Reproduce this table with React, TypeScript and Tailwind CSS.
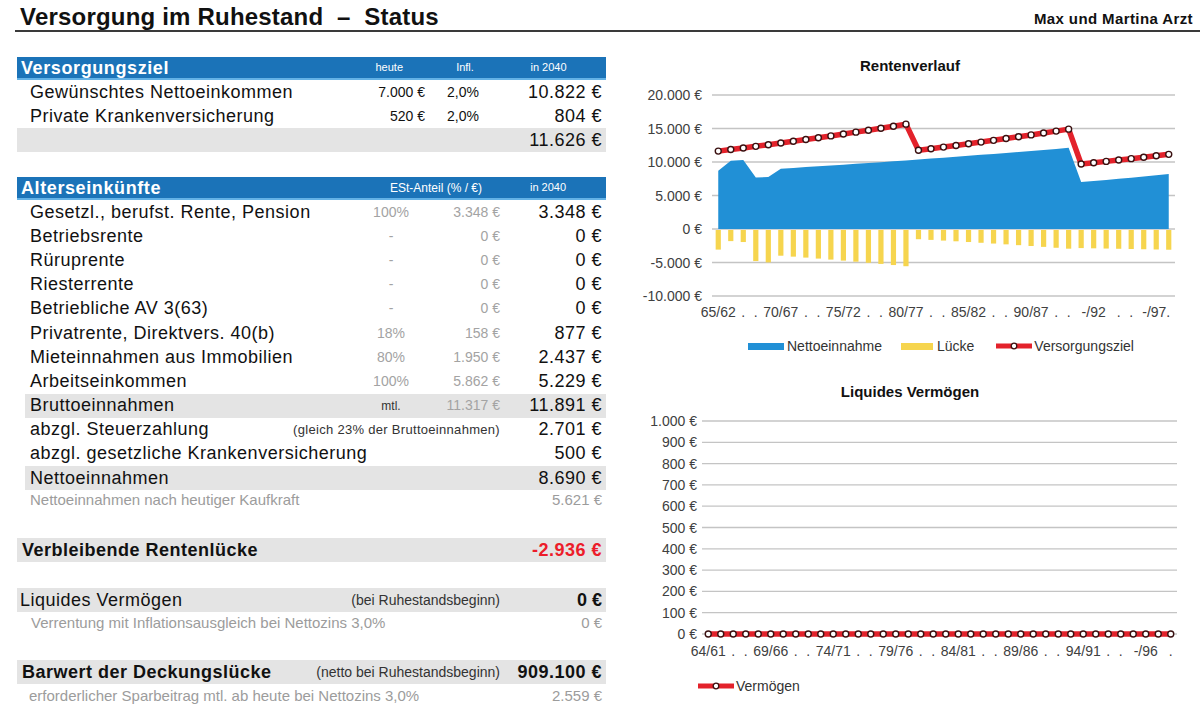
import React from "react";

// Rentenverlauf: 37 Jahre, Versorgungsziel wächst mit 2 % Inflation
const N1 = 37;
const STEP1 = 463 / N1;
const cx1 = (i: number) => 92 + STEP1 * (i + 0.5);
const cy1 = (v: number) => 153 - (v / 5000) * 33.5;
const ziel = Array.from({ length: N1 }, (_, i) =>
  i <= 15 ? 11626 * 1.02 ** i : i <= 28 ? 11750 * 1.02 ** (i - 16) : 9700 * 1.02 ** (i - 29)
);
const head = [8700, 10200, 10300, 7700, 7750];
const netto = Array.from({ length: N1 }, (_, i) =>
  i < 5 ? head[i] : i <= 28 ? 9000 * 1.013 ** (i - 5) : 7000 * 1.0228 ** (i - 29)
);

// Liquides Vermögen: 38 Jahre, alles 0
const N2 = 38;
const STEP2 = 475 / N2;
const cx2 = (i: number) => 82 + STEP2 * (i + 0.5);
const cy2 = (v: number) => 232 - (v / 100) * 21.3;

function Marker({ x, y }: { x: number; y: number }) {
  return <circle cx={x} cy={y} r={3} fill="#fff" stroke="#3a1010" strokeWidth={1.4} />;
}

function RentenChart() {
  const area =
    `M${cx1(0)},${cy1(0)} ` +
    netto.map((v, i) => `L${cx1(i)},${cy1(v)}`).join(" ") +
    ` L${cx1(N1 - 1)},${cy1(0)} Z`;
  const line = ziel.map((v, i) => `${i === 0 ? "M" : "L"}${cx1(i)},${cy1(v)}`).join(" ");
  const labels = ["65/62", "70/67", "75/72", "80/77", "85/82", "90/87", "-/92", "-/97."];
  const dots = [2, 3, 7, 8, 12, 13, 17, 18, 22, 23, 27, 28, 32, 33];
  return (
    <svg width={580} height={250} viewBox="0 0 580 250" className="block">
      {[20000, 15000, 10000, 5000, 0, -5000, -10000].map((v) => (
        <g key={v}>
          <line x1={92} x2={555} y1={cy1(v)} y2={cy1(v)} stroke="#c4c4c4" strokeWidth={1.3} />
          <text x={82} y={cy1(v) + 5} textAnchor="end" fontSize={14} fill="#404040">
            {v.toLocaleString("de-DE")} €
          </text>
        </g>
      ))}
      <path d={area} fill="#2190d6" />
      {netto.map((v, i) => (
        <rect
          key={i}
          x={cx1(i) - 2.6}
          y={cy1(0) + 1}
          width={5.2}
          height={((ziel[i] - v) / 5000) * 33.5}
          fill="#f6d54e"
        />
      ))}
      <path d={line} fill="none" stroke="#e3222b" strokeWidth={5.5} strokeLinejoin="round" />
      {ziel.map((v, i) => (
        <Marker key={i} x={cx1(i)} y={cy1(v)} />
      ))}
      {labels.map((t, k) => (
        <text key={t} x={cx1(k * 5)} y={241} textAnchor="middle" fontSize={14} fill="#404040">
          {t}
        </text>
      ))}
      {dots.map((i) => (
        <text key={i} x={cx1(i)} y={241} textAnchor="middle" fontSize={14} fill="#404040">
          .
        </text>
      ))}
    </svg>
  );
}

function VermoegenChart() {
  const labels = ["64/61", "69/66", "74/71", "79/76", "84/81", "89/86", "94/91", "-/96"];
  const dots = [2, 3, 7, 8, 12, 13, 17, 18, 22, 23, 27, 28, 32, 33, 37];
  return (
    <svg width={580} height={260} viewBox="0 0 580 260" className="block">
      {[1000, 900, 800, 700, 600, 500, 400, 300, 200, 100, 0].map((v) => (
        <g key={v}>
          <line x1={82} x2={557} y1={cy2(v)} y2={cy2(v)} stroke="#c4c4c4" strokeWidth={1.3} />
          <text x={77} y={cy2(v) + 5} textAnchor="end" fontSize={14} fill="#404040">
            {v.toLocaleString("de-DE")} €
          </text>
        </g>
      ))}
      <line x1={cx2(0)} x2={cx2(N2 - 1)} y1={cy2(0)} y2={cy2(0)} stroke="#e3222b" strokeWidth={5.5} />
      {Array.from({ length: N2 }, (_, i) => (
        <Marker key={i} x={cx2(i)} y={cy2(0)} />
      ))}
      {labels.map((t, k) => (
        <text key={t} x={cx2(k * 5)} y={254} textAnchor="middle" fontSize={14} fill="#404040">
          {t}
        </text>
      ))}
      {dots.map((i) => (
        <text key={i} x={cx2(i)} y={254} textAnchor="middle" fontSize={14} fill="#404040">
          .
        </text>
      ))}
    </svg>
  );
}

function LineSwatch() {
  return (
    <svg width={36} height={10} viewBox="0 0 36 10" className="block">
      <line x1={0} x2={36} y1={5} y2={5} stroke="#e3222b" strokeWidth={5} />
      <circle cx={18} cy={5} r={2.8} fill="#fff" stroke="#3a1010" strokeWidth={1.3} />
    </svg>
  );
}

function BlueBar({ title, children }: { title: string; children: React.ReactNode }) {
  return (
    <div className="flex items-center h-[23px] bg-[#1b73b8] border-b-2 border-[#63b2e6] pl-[4px] pr-[4px] text-white">
      <div className="flex-1 text-[18px] font-bold tracking-[0.6px] leading-none">{title}</div>
      {children}
    </div>
  );
}

type RowProps = {
  label: string;
  pct?: string;
  amt?: string;
  value: string;
};

function EinkunftRow({ label, pct, amt, value }: RowProps) {
  return (
    <div className="flex items-center h-[24.2px] pl-[13px] pr-[4px]">
      <div className="flex-1 text-[18px] tracking-[0.5px]">{label}</div>
      <div className="w-[62px] text-center text-[14px] text-[#a3a3a3]">{pct}</div>
      <div className="w-[78px] text-right text-[14px] text-[#a3a3a3]">{amt}</div>
      <div className="w-[102px] text-right text-[18px] tracking-[0.5px]">{value}</div>
    </div>
  );
}

const einkuenfte: RowProps[] = [
  { label: "Gesetzl., berufst. Rente, Pension", pct: "100%", amt: "3.348 €", value: "3.348 €" },
  { label: "Betriebsrente", pct: "-", amt: "0 €", value: "0 €" },
  { label: "Rüruprente", pct: "-", amt: "0 €", value: "0 €" },
  { label: "Riesterrente", pct: "-", amt: "0 €", value: "0 €" },
  { label: "Betriebliche AV 3(63)", pct: "-", amt: "0 €", value: "0 €" },
  { label: "Privatrente, Direktvers. 40(b)", pct: "18%", amt: "158 €", value: "877 €" },
  { label: "Mieteinnahmen aus Immobilien", pct: "80%", amt: "1.950 €", value: "2.437 €" },
  { label: "Arbeitseinkommen", pct: "100%", amt: "5.862 €", value: "5.229 €" },
];

export default function App() {
  return (
    <div className="w-[1200px] h-[722px] overflow-hidden bg-white text-[#111] font-['Liberation_Sans',Arial,sans-serif]">
      <header className="flex items-end justify-between h-[32px] ml-[15px] border-b-2 border-[#3a3a3a] pl-[5px] pr-[7px]">
        <h1 className="text-[24px] font-bold tracking-[0.2px] leading-[26px]">
          Versorgung im Ruhestand&nbsp; –&nbsp; Status
        </h1>
        <span className="text-[15px] font-bold tracking-[0.4px] leading-[20px] pb-[1px]">Max und Martina Arzt</span>
      </header>

      <div className="flex">
        {/* linke Spalte: Tabellen */}
        <section className="w-[589px] ml-[17px] pt-[25px]">
          <BlueBar title="Versorgungsziel">
            <div className="w-[80px] text-right pr-[22px] text-[11px]">heute</div>
            <div className="w-[80px] text-center text-[11px]">Infl.</div>
            <div className="w-[97px] text-center pr-[10px] text-[11px]">in 2040</div>
          </BlueBar>
          {[
            ["Gewünschtes Nettoeinkommen", "7.000 €", "2,0%", "10.822 €"],
            ["Private Krankenversicherung", "520 €", "2,0%", "804 €"],
          ].map(([l, h, f, v]) => (
            <div key={l} className="flex items-center h-[24px] pl-[13px] pr-[4px]">
              <div className="flex-1 text-[18px] tracking-[0.5px]">{l}</div>
              <div className="w-[80px] text-right text-[14px]">{h}</div>
              <div className="w-[80px] pl-[22px] text-[14px]">{f}</div>
              <div className="w-[97px] text-right text-[18px] tracking-[0.5px]">{v}</div>
            </div>
          ))}
          <div className="flex items-center justify-end h-[24px] bg-[#e4e4e4] pr-[4px] text-[18px] tracking-[0.5px]">
            11.626 €
          </div>

          <div className="mt-[25px]">
            <BlueBar title="Alterseinkünfte">
              <div className="w-[140px] text-center pl-[12px] text-[12px]">ESt-Anteil (% / €)</div>
              <div className="w-[102px] text-center pr-[6px] text-[11px]">in 2040</div>
            </BlueBar>
          </div>
          {einkuenfte.map((r) => (
            <EinkunftRow key={r.label} {...r} />
          ))}
          <div className="flex items-center h-[24.2px] ml-[8px] pl-[5px] pr-[4px] bg-[#e4e4e4]">
            <div className="flex-1 text-[18px] tracking-[0.5px]">Bruttoeinnahmen</div>
            <div className="w-[62px] text-center text-[12px] text-[#333]">mtl.</div>
            <div className="w-[78px] text-right text-[14px] text-[#a3a3a3]">11.317 €</div>
            <div className="w-[102px] text-right text-[18px] tracking-[0.5px]">11.891 €</div>
          </div>
          <div className="flex items-center h-[24.2px] pl-[13px] pr-[4px]">
            <div className="flex-1 text-[18px] tracking-[0.5px]">abzgl. Steuerzahlung</div>
            <div className="text-[13px] tracking-[0.3px] text-[#333]">(gleich 23% der Bruttoeinnahmen)</div>
            <div className="w-[102px] text-right text-[18px] tracking-[0.5px]">2.701 €</div>
          </div>
          <div className="flex items-center h-[24.2px] pl-[13px] pr-[4px]">
            <div className="flex-1 text-[18px] tracking-[0.5px]">abzgl. gesetzliche Krankenversicherung</div>
            <div className="w-[102px] text-right text-[18px] tracking-[0.5px]">500 €</div>
          </div>
          <div className="flex items-center h-[24.2px] ml-[8px] pl-[5px] pr-[4px] bg-[#e4e4e4]">
            <div className="flex-1 text-[18px] tracking-[0.5px]">Nettoeinnahmen</div>
            <div className="w-[102px] text-right text-[18px] tracking-[0.5px]">8.690 €</div>
          </div>
          <div className="flex items-center h-[20px] pl-[13px] pr-[4px] text-[15px] text-[#9c9c9c]">
            <div className="flex-1">Nettoeinnahmen nach heutiger Kaufkraft</div>
            <div>5.621 €</div>
          </div>

          <div className="flex items-center h-[24px] mt-[28px] pl-[5px] pr-[4px] bg-[#e4e4e4] font-bold text-[18px] tracking-[0.5px]">
            <div className="flex-1">Verbleibende Rentenlücke</div>
            <div className="text-[#ec1c2a]">-2.936 €</div>
          </div>

          <div className="flex items-center h-[24px] mt-[26px] pl-[3px] pr-[4px] bg-[#e4e4e4]">
            <div className="flex-1 text-[18px] tracking-[0.5px]">Liquides Vermögen</div>
            <div className="text-[14px] text-[#333]">(bei Ruhestandsbeginn)</div>
            <div className="w-[102px] text-right text-[18px] font-bold">0 €</div>
          </div>
          <div className="flex items-center h-[22px] pl-[14px] pr-[4px] text-[15px] text-[#9c9c9c]">
            <div className="flex-1">Verrentung mit Inflationsausgleich bei Nettozins 3,0%</div>
            <div>0 €</div>
          </div>

          <div className="flex items-center h-[24px] mt-[26px] pl-[5px] pr-[4px] bg-[#e4e4e4]">
            <div className="flex-1 text-[18px] font-bold tracking-[0.5px]">Barwert der Deckungslücke</div>
            <div className="text-[14px] text-[#333]">(netto bei Ruhestandsbeginn)</div>
            <div className="w-[102px] text-right text-[18px] font-bold tracking-[0.5px]">909.100 €</div>
          </div>
          <div className="flex items-center h-[24px] pl-[12px] pr-[4px] text-[15px] text-[#9c9c9c]">
            <div className="flex-1">erforderlicher Sparbeitrag mtl. ab heute bei Nettozins 3,0%</div>
            <div>2.559 €</div>
          </div>
        </section>

        {/* rechte Spalte: Diagramme */}
        <section className="w-[580px] ml-[14px]">
          <div className="pt-[24px] h-[44px] text-center text-[15px] font-bold leading-[20px]">Rentenverlauf</div>
          <RentenChart />
          <div className="flex items-center h-[40px] pl-[128px] text-[14px] text-[#333]">
            <span className="w-[36px] h-[7px] bg-[#2190d6]" />
            <span className="ml-[3px]">Nettoeinnahme</span>
            <span className="ml-[19px] w-[32px] h-[7px] bg-[#f6d54e]" />
            <span className="ml-[4px]">Lücke</span>
            <span className="ml-[22px]">
              <LineSwatch />
            </span>
            <span className="ml-[2px]">Versorgungsziel</span>
          </div>

          <div className="pt-[16px] h-[36px] text-center text-[15px] font-bold leading-[20px]">Liquides Vermögen</div>
          <VermoegenChart />
          <div className="flex items-center h-[48px] pl-[78px] text-[14px] text-[#333]">
            <LineSwatch />
            <span className="ml-[2px]">Vermögen</span>
          </div>
        </section>
      </div>
    </div>
  );
}
